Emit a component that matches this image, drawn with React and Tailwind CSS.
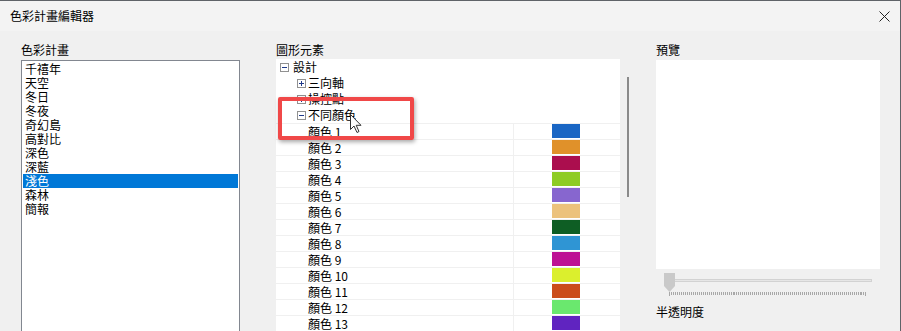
import React from "react";

const schemes = ["千禧年", "天空", "冬日", "冬夜", "奇幻島", "高對比", "深色", "深藍", "淺色", "森林", "簡報"];

const colors = [
  "#1a66c4", "#e0912a", "#ab0e4e", "#8ecc24", "#8766cf", "#ecc27c", "#0e5e24",
  "#2f95d4", "#bd1194", "#dbef2d", "#cb4c1a", "#6ae86e", "#6024c0",
];

function Expander({ open }) {
  return (
    <span className="relative w-[9px] h-[9px] border border-[#919191] bg-white flex items-center justify-center shrink-0">
      <span className="absolute w-[5px] h-[1px] bg-[#1f3a8a]" />
      {!open && <span className="absolute w-[1px] h-[5px] bg-[#1f3a8a]" />}
    </span>
  );
}

function TreeRow({ depth, open, label, h = "h-[16px]" }) {
  return (
    <div className={`flex items-center ${h}`}>
      <div className={depth === 0 ? "w-[4px]" : "w-[21px]"} />
      <Expander open={open} />
      <span className={depth === 0 ? "ml-[4px]" : "ml-[2px]"}>{label}</span>
    </div>
  );
}

export default function App() {
  return (
    <div
      className="relative w-[901px] h-[331px] overflow-hidden bg-[#f0f0f0] border-t border-r border-[#5f6368] text-[12px] text-black"
      style={{ fontFamily: '"Noto Sans CJK TC", "Noto Sans", sans-serif' }}
    >
      {/* Title bar */}
      <div className="h-[30px] bg-[#f3f3f3] flex items-center justify-between pl-[10px] pr-[10px]">
        <span className="leading-none">色彩計畫編輯器</span>
        <svg width="11" height="11" viewBox="0 0 11 11">
          <path d="M0.5 0.5 L10.5 10.5 M10.5 0.5 L0.5 10.5" stroke="#222" strokeWidth="1" />
        </svg>
      </div>

      {/* Body */}
      <div className="flex pt-[12px] pl-[21px]">
        {/* Schemes */}
        <div className="w-[219px] flex flex-col">
          <div className="h-[17px] leading-[14px]">色彩計畫</div>
          <div className="h-[300px] border border-[#828790] bg-white p-[1px]">
            {schemes.map((s) => (
              <div
                key={s}
                className={`h-[14px] leading-[14px] pl-[2px] ${s === "淺色" ? "bg-[#0078d7] text-white" : ""}`}
              >
                {s}
              </div>
            ))}
          </div>
        </div>

        {/* Tree */}
        <div className="ml-[36px] w-[360px] flex flex-col">
          <div className="h-[17px] leading-[14px]">圖形元素</div>
          <div className="flex h-[300px]">
            <div className="w-[344px] bg-white flex flex-col -mt-[1px]">
              <TreeRow depth={0} open label="設計" />
              <TreeRow depth={1} label="三向軸" />
              <TreeRow depth={1} label="操控點" />
              <TreeRow depth={1} open label="不同顏色" />
              {colors.map((c, i) => (
                <div key={c} className="flex h-[16px] border-t border-[#f0f0f0]">
                  <div className="w-[238px] border-r border-[#f0f0f0] pl-[32px] leading-[15px]">
                    顏色 {i + 1}
                  </div>
                  <div className="pl-[38px]">
                    <div className="w-[28px] h-[14px]" style={{ background: c }} />
                  </div>
                </div>
              ))}
            </div>
            <div className="w-[16px] pt-[17px] pl-[7px]">
              <div className="w-[2px] h-[120px] bg-[#8a8a8a]" />
            </div>
          </div>
        </div>

        {/* Preview */}
        <div className="ml-[20px] w-[224px] flex flex-col">
          <div className="h-[17px] leading-[14px]">預覽</div>
          <div className="h-[209px] bg-white" />
          <div className="relative h-[24px] mt-[4px]">
            <div className="absolute left-[16px] right-[8px] top-[6px] h-[3px] bg-[#e6e6e6] border border-[#d2d2d2]" />
            <svg className="absolute left-[8px] top-0" width="12" height="19" viewBox="0 0 12 19">
              <path d="M0 0 H11 V13 L5.5 19 L0 13 Z" fill="#c9c9c9" />
            </svg>
            <div className="absolute left-[13px] right-[13px] top-[19px] h-[4px] flex justify-between">
              {Array.from({ length: 100 }).map((_, i) => (
                <div key={i} className={`w-[1px] ${i === 0 || i === 99 ? "h-[4px]" : "h-[3px]"} bg-[#a8a8a8]`} />
              ))}
            </div>
          </div>
          <div className="mt-[8px] leading-[14px]">半透明度</div>
        </div>
      </div>

      {/* Annotation highlight */}
      <div className="absolute left-[278px] top-[96px] w-[136px] h-[43px] border-[4px] border-[#f04848] rounded-[2px] shadow-[1px_2px_4px_rgba(0,0,0,0.35)]" />

      {/* Mouse cursor */}
      <svg className="absolute left-[350px] top-[113px]" width="13" height="20" viewBox="0 0 13 20">
        <path d="M0.5 0.5 V15.5 L4 12 L7 18.5 L9 17.5 L6.2 11.3 L11 11.3 Z" fill="#fff" stroke="#333" strokeWidth="1" />
      </svg>
    </div>
  );
}
